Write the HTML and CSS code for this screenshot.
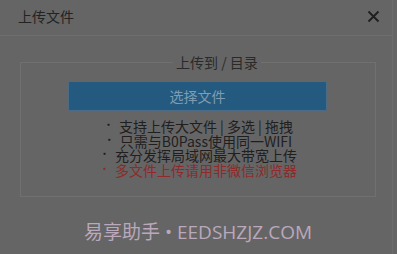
FILE: index.html
```html
<!DOCTYPE html>
<html lang="zh">
<head>
<meta charset="utf-8">
<link rel="stylesheet" href="styles.css">
</head>
<body>
<div class="dialog">
  <div class="header">
    <span class="title">上传文件</span>
    <svg class="close" width="13" height="13" viewBox="0 0 13 13"><path d="M1.5 1.5 L11.5 11.5 M11.5 1.5 L1.5 11.5" stroke="#1e1e1e" stroke-width="1.8" fill="none"/></svg>
  </div>
  <div class="body">
    <fieldset class="box">
      <legend class="target">上传到 / 目录</legend>
      <div class="btn">选择文件</div>
      <ul class="tips">
        <li><span class="dot">•</span>支持上传大文件 | 多选 | 拖拽</li>
        <li><span class="dot">•</span>只需与B0Pass使用同一WIFI</li>
        <li><span class="dot">•</span>充分发挥局域网最大带宽上传</li>
        <li class="warn"><span class="dot">•</span>多文件上传请用非微信浏览器</li>
      </ul>
    </fieldset>
  </div>
  <div class="watermark">易享助手 • EEDSHZJZ.COM</div>
</div>
</body>
</html>
```
FILE: styles.css
```css
html, body {
  margin: 0;
  padding: 0;
  background: #656565;
}
body {
  width: 397px;
  height: 254px;
  overflow: hidden;
  font-family: "Noto Sans CJK SC", "Noto Sans", sans-serif;
  color: #222;
}
.dialog {
  display: flex;
  flex-direction: column;
  height: 254px;
  border-right: 1px solid #6c6c6c;
  box-sizing: border-box;
  width: 393px;
}
.header {
  display: flex;
  align-items: flex-start;
  justify-content: space-between;
  padding: 7px 12px 0 18px;
  box-sizing: border-box;
  height: 36px;
  border-bottom: 1px solid #6e6e6e;
}
.title {
  font-size: 14px;
  line-height: 18px;
  color: #232323;
}
.close {
  display: block;
  margin-top: 3px;
}
.body {
  padding: 19px 16px 0 20px;
}
.box {
  margin: 0;
  border: 1px solid #707070;
  padding: 12px 0 18px;
  display: flex;
  flex-direction: column;
  align-items: center;
  min-width: 0;
}
.target {
  margin-left: 152px;
  padding: 0 3px;
  font-size: 14px;
  line-height: 14px;
  color: #2a2a2a;
}
.btn {
  width: 259px;
  height: 30px;
  margin-left: 47px;
  align-self: flex-start;
  background: #255a80;
  border: 1px solid #4a6c86;
  box-sizing: border-box;
  border-radius: 2px;
  display: flex;
  align-items: center;
  justify-content: center;
  font-size: 14px;
  color: #7f9db2;
}
.tips {
  list-style: none;
  margin: 8px 0 0;
  padding: 0;
  display: flex;
  flex-direction: column;
  align-items: center;
  font-size: 14px;
  line-height: 14.7px;
  color: #1f1f1f;
}
.tips li {
  display: flex;
  align-items: flex-start;
}
.dot {
  font-size: 11px;
  line-height: 10px;
  margin-right: 5px;
  margin-top: 0;
}
.warn {
  color: #8e2a2a;
}
.watermark {
  margin-top: 24px;
  text-align: center;
  padding-left: 4px;
  font-family: "Open Sans", "Noto Sans CJK SC", sans-serif;
  font-size: 19px;
  line-height: 22px;
  color: #baa8bc;
}
```
